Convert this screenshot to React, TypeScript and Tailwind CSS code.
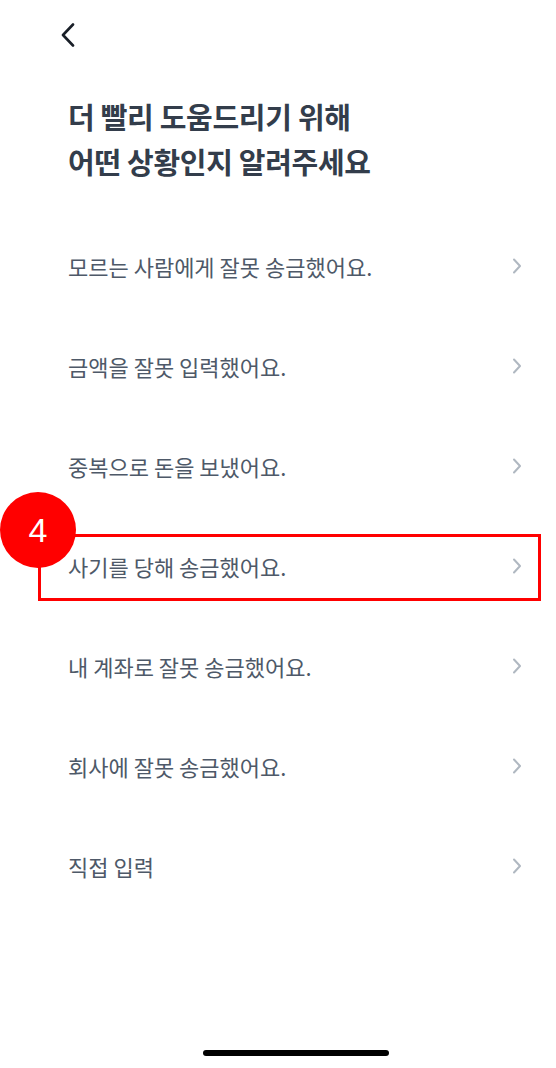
import React from "react";

const items = [
  "모르는 사람에게 잘못 송금했어요.",
  "금액을 잘못 입력했어요.",
  "중복으로 돈을 보냈어요.",
  "사기를 당해 송금했어요.",
  "내 계좌로 잘못 송금했어요.",
  "회사에 잘못 송금했어요.",
  "직접 입력",
];

function Chevron() {
  return (
    <svg width="10" height="16" viewBox="0 0 10 16" fill="none">
      <path d="M2 1.5 L8 8 L2 14.5" stroke="#b0b8c1" strokeWidth="2" strokeLinecap="round" strokeLinejoin="round" />
    </svg>
  );
}

export default function App() {
  return (
    <div
      className="relative w-[556px] h-[1068px] bg-white overflow-hidden flex flex-col"
      style={{ fontFamily: '"Noto Sans CJK KR", "Noto Sans", sans-serif' }}
    >
      <header className="h-[70px] flex items-center pl-[60px]">
        <svg width="16" height="24" viewBox="0 0 16 24" fill="none">
          <path d="M13 1.5 L3 12 L13 22.5" stroke="#191f28" strokeWidth="2.6" strokeLinecap="round" strokeLinejoin="round" />
        </svg>
      </header>
      <h1 className="mt-[24px] pl-[68px] text-[29px] leading-[45px] font-bold text-[#333d4b] tracking-[-0.3px]">
        더 빨리 도움드리기 위해
        <br />
        어떤 상황인지 알려주세요
      </h1>
      <ul className="mt-[32px] flex flex-col">
        {items.map((t, i) => (
          <li key={i} className="relative h-[100px] flex items-center justify-between pl-[68px] pr-[34px]">
            <span className="text-[22px] text-[#4e5968]">{t}</span>
            <Chevron />
            {i === 3 && (
              <>
                <div className="absolute left-[38px] right-[15px] top-[18px] h-[67px] border-[3px] border-[#ff0000]" />
                <div className="absolute left-0 top-[-24px] w-[76px] h-[76px] rounded-full bg-[#ff0000] flex items-center justify-center">
                  <span className="text-white text-[34px] leading-none" style={{ fontFamily: '"Liberation Sans", Arial, sans-serif' }}>4</span>
                </div>
              </>
            )}
          </li>
        ))}
      </ul>
      <div className="mt-auto mb-[12px] ml-[203px] w-[186px] h-[6px] rounded-full bg-black" />
    </div>
  );
}
